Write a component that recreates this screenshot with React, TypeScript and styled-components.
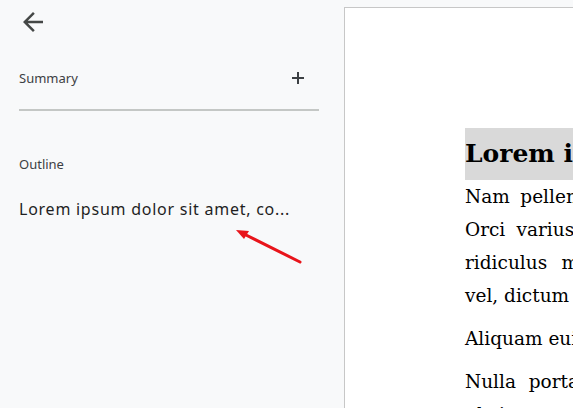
import styled, { createGlobalStyle } from "styled-components";

const GlobalStyle = createGlobalStyle`
  html, body {
    margin: 0;
    padding: 0;
    height: 100%;
    overflow: hidden;
    background: #f8f9fa;
  }
  #root {
    height: 100%;
  }
`;

const Layout = styled.div`
  position: relative;
  display: flex;
  height: 408px;
  width: 573px;
  overflow: hidden;
  background: #f8f9fa;
`;

const Sidebar = styled.aside`
  flex: 0 0 344px;
  display: flex;
  flex-direction: column;
  padding: 7px 25px 0 19px;
  box-sizing: border-box;
  font-family: "Noto Sans", Roboto, Arial, sans-serif;
`;

const IconButton = styled.button`
  width: 30px;
  height: 30px;
  margin-left: -1px;
  padding: 0;
  border: none;
  background: none;
  color: #444746;
  display: flex;
  align-items: center;
  justify-content: center;
`;

const SectionHeader = styled.div<{ $divider?: boolean }>`
  display: flex;
  align-items: center;
  justify-content: space-between;
  height: 28px;
  margin-top: ${({ $divider }) => ($divider ? "27px" : "39px")};
  padding-bottom: ${({ $divider }) => ($divider ? "17px" : "0")};
  border-bottom: ${({ $divider }) => ($divider ? "2px solid #c4c7c5" : "none")};
`;

const SectionLabel = styled.span`
  font-size: 13px;
  color: #3c4043;
`;

const AddIcon = styled.span`
  display: flex;
  margin-right: 15px;
  color: #3c4043;
`;

const OutlineItem = styled.div`
  margin-top: 20px;
  font-size: 16px;
  letter-spacing: 0.75px;
  color: #1f1f1f;
  white-space: nowrap;
`;

const Page = styled.main`
  flex: 0 0 816px;
  margin-top: 7px;
  background: #fff;
  border-left: 1px solid #c7c7c7;
  border-top: 1px solid #c7c7c7;
  padding: 120px 0 0 120px;
  box-sizing: border-box;
  font-family: "DejaVu Serif", "Liberation Serif", serif;
  color: #000;
`;

const Heading = styled.h1`
  margin: 0;
  width: 640px;
  height: 52px;
  line-height: 52px;
  background: #d9d9d9;
  font-size: 25px;
  font-weight: bold;
`;

const Paragraph = styled.div`
  margin-bottom: 10px;
  font-size: 18.5px;
  line-height: 33px;
  width: 640px;
`;

const Line = styled.div<{ $last?: boolean }>`
  white-space: nowrap;
  text-align: justify;
  text-align-last: ${({ $last }) => ($last ? "left" : "justify")};
`;

const Pointer = styled.svg`
  position: absolute;
  left: 232px;
  top: 226px;
`;

const paragraphs = [
  [
    "Nam pellentesque lorem et nisl molestie, sit amet bibendum ut.",
    "Orci varius natoque penatibus et magnis dis parturient montes,",
    "ridiculus mus. Nulla facilisi. Donec gravida nisi nec tellus in",
    "vel, dictum nunc feugiat.",
  ],
  ["Aliquam euismod tincidunt lorem."],
  ["Nulla porta tortor in turpis consectetur, non scelerisque ligula", "ultrices."],
];

const App = () => {
  return (
    <>
      <GlobalStyle />
      <Layout>
        <Sidebar>
          <IconButton aria-label="Back">
            <svg width="30" height="30" viewBox="0 0 24 24" fill="currentColor">
              <path d="M20 11H7.83l5.59-5.59L12 4l-8 8 8 8 1.41-1.41L7.83 13H20v-2z" />
            </svg>
          </IconButton>
          <SectionHeader $divider>
            <SectionLabel>Summary</SectionLabel>
            <AddIcon>
              <svg width="12" height="12" viewBox="0 0 12 12">
                <path d="M6 0v12M0 6h12" stroke="currentColor" strokeWidth="2" />
              </svg>
            </AddIcon>
          </SectionHeader>
          <SectionHeader>
            <SectionLabel>Outline</SectionLabel>
          </SectionHeader>
          <OutlineItem>Lorem ipsum dolor sit amet, co...</OutlineItem>
        </Sidebar>
        <Page>
          <Heading>Lorem ipsum dolor sit amet</Heading>
          {paragraphs.map((lines, i) => (
            <Paragraph key={i}>
              {lines.map((text, j) => (
                <Line key={j} $last={j === lines.length - 1}>
                  {text}
                </Line>
              ))}
            </Paragraph>
          ))}
        </Page>
        <Pointer width="72" height="40" viewBox="0 0 72 40">
          <path d="M68 36L10 7" stroke="#e8141a" strokeWidth="3" strokeLinecap="round" />
          <path d="M4 4L17 5L12 13Z" fill="#e8141a" />
        </Pointer>
      </Layout>
    </>
  );
};

export default App;
